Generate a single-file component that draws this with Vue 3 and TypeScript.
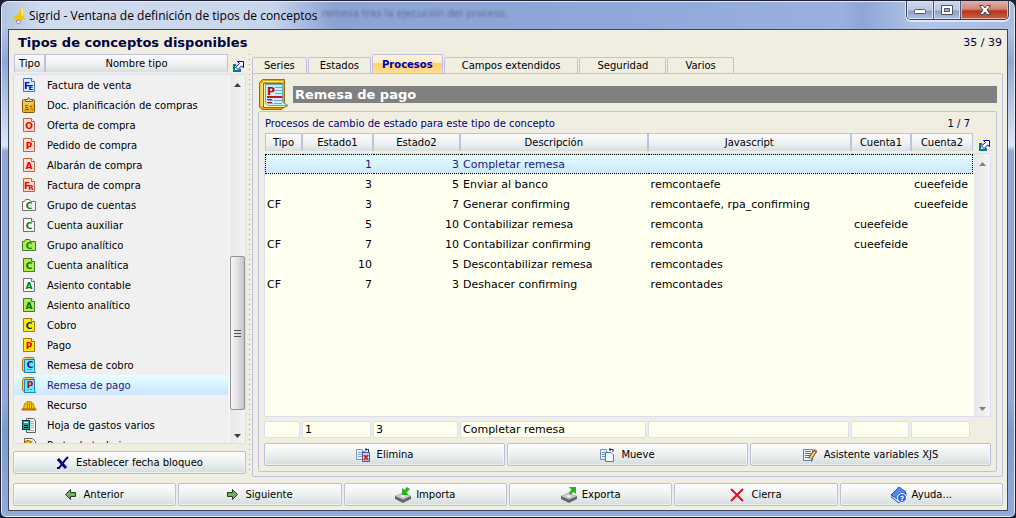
<script setup lang="ts">
import { ref } from 'vue'

type IconKind = 'doc' | 'folder' | 'book' | 'clip' | 'hat' | 'calc' | 'work'

interface Concept {
  name: string
  kind: IconKind
  letter?: string
  sub?: string
  fill?: string
  line?: string
  ink?: string
}

interface Process {
  tipo: string
  from: string
  to: string
  text: string
  js: string
  c1: string
  c2: string
}

const concepts: Concept[] = [
  { name: 'Factura de venta', kind: 'doc', letter: 'F', sub: 'E', fill: '#dcecff', line: '#4a76b8', ink: '#0000e0' },
  { name: 'Doc. planificación de compras', kind: 'clip' },
  { name: 'Oferta de compra', kind: 'doc', letter: 'O', fill: '#ffdcd0', line: '#b86a40', ink: '#f00000' },
  { name: 'Pedido de compra', kind: 'doc', letter: 'P', fill: '#ffdcd0', line: '#b86a40', ink: '#f00000' },
  { name: 'Albarán de compra', kind: 'doc', letter: 'A', fill: '#ffdcd0', line: '#b86a40', ink: '#f00000' },
  { name: 'Factura de compra', kind: 'doc', letter: 'F', sub: 'R', fill: '#ffdcd0', line: '#b86a40', ink: '#f00000' },
  { name: 'Grupo de cuentas', kind: 'folder', letter: 'C', fill: '#f8f8f8', line: '#707070', ink: '#008000' },
  { name: 'Cuenta auxiliar', kind: 'doc', letter: 'C', fill: '#f8f8f8', line: '#707070', ink: '#008000' },
  { name: 'Grupo analítico', kind: 'folder', letter: 'C', fill: '#b4ec50', line: '#3f7a30', ink: '#008000' },
  { name: 'Cuenta analítica', kind: 'doc', letter: 'C', fill: '#b4ec50', line: '#3f7a30', ink: '#007000' },
  { name: 'Asiento contable', kind: 'doc', letter: 'A', fill: '#f8f8f8', line: '#707070', ink: '#008000' },
  { name: 'Asiento analítico', kind: 'doc', letter: 'A', fill: '#b4ec50', line: '#3f7a30', ink: '#007000' },
  { name: 'Cobro', kind: 'doc', letter: 'C', fill: '#ffee00', line: '#a87800', ink: '#002878' },
  { name: 'Pago', kind: 'doc', letter: 'P', fill: '#ffee00', line: '#a87800', ink: '#e00000' },
  { name: 'Remesa de cobro', kind: 'book', letter: 'C', ink: '#002060' },
  { name: 'Remesa de pago', kind: 'book', letter: 'P', ink: '#d00000' },
  { name: 'Recurso', kind: 'hat' },
  { name: 'Hoja de gastos varios', kind: 'calc' },
  { name: 'Parte de trabajo', kind: 'work' },
]

const processes: Process[] = [
  { tipo: '', from: '1', to: '3', text: 'Completar remesa', js: '', c1: '', c2: '' },
  { tipo: '', from: '3', to: '5', text: 'Enviar al banco', js: 'remcontaefe', c1: '', c2: 'cueefeide' },
  { tipo: 'CF', from: '3', to: '7', text: 'Generar confirming', js: 'remcontaefe, rpa_confirming', c1: '', c2: 'cueefeide' },
  { tipo: '', from: '5', to: '10', text: 'Contabilizar remesa', js: 'remconta', c1: 'cueefeide', c2: '' },
  { tipo: 'CF', from: '7', to: '10', text: 'Contabilizar confirming', js: 'remconta', c1: 'cueefeide', c2: '' },
  { tipo: '', from: '10', to: '5', text: 'Descontabilizar remesa', js: 'remcontades', c1: '', c2: '' },
  { tipo: 'CF', from: '7', to: '3', text: 'Deshacer confirming', js: 'remcontades', c1: '', c2: '' },
]

const tabs = ['Series', 'Estados', 'Procesos', 'Campos extendidos', 'Seguridad', 'Varios']
const columns = ['Tipo', 'Estado1', 'Estado2', 'Descripción', 'Javascript', 'Cuenta1', 'Cuenta2']

const activeTab = ref('Procesos')
const selectedConcept = ref(15)
const selectedProcess = ref(0)
const fields = ref(['', '1', '3', 'Completar remesa', '', '', ''])

function pickProcess(i: number) {
  const p = processes[i]
  selectedProcess.value = i
  fields.value = [p.tipo, p.from, p.to, p.text, p.js, p.c1, p.c2]
}
</script>

<template>
  <div class="window">
    <header class="titlebar">
      <svg class="app-icon" width="14" height="18" viewBox="0 0 14 18">
        <path d="M8 1L10 2V9L12 12L8 13L4 14L1 13L0 11L5 7Z" fill="#f4c400" />
        <path d="M8 1L10 2V9L8 8Z" fill="#ffe860" />
        <path d="M3 14L5 17L8 15L7 13Z" fill="#f4f4f4" stroke="#8b93a8" stroke-width="1" />
      </svg>
      <h1>Sigrid - Ventana de definición de tipos de conceptos</h1>
      <span class="ghost" aria-hidden="true">remesa tras la ejecución del proceso.</span>
      <div class="win-buttons">
        <button type="button" class="wb min" aria-label="Minimizar">
          <svg width="14" height="12" viewBox="0 0 14 12"><rect x="1.500" y="5.500" width="11" height="4" rx="1" fill="#fff" stroke="#4c5164" /></svg>
        </button>
        <button type="button" class="wb max" aria-label="Maximizar">
          <svg width="14" height="12" viewBox="0 0 14 12">
            <path d="M1.500 1.500H12.500V10.500H1.500Z" fill="#fff" stroke="#4c5164" />
            <path d="M4.500 4.500H9.500V7.500H4.500Z" fill="#9fb0d8" stroke="#4c5164" />
          </svg>
        </button>
        <button type="button" class="wb close" aria-label="Cerrar">
          <svg width="14" height="12" viewBox="0 0 14 12">
            <path d="M1.500 1.500H5L7 4L9 1.500H12.500L9 6L12.500 10.500H9L7 8L5 10.500H1.500L5 6Z" fill="#fff" stroke="#54495c" />
          </svg>
        </button>
      </div>
    </header>

    <main class="client">
      <div class="top">
        <h2>Tipos de conceptos disponibles</h2>
        <span class="count">35 / 39</span>
      </div>

      <div class="body">
        <section class="left">
          <div class="concepts">
            <div class="list-box"></div>
            <div class="clip">
              <table class="concept-table">
                <colgroup><col class="c-icon" /><col /></colgroup>
                <thead>
                  <tr><th scope="col">Tipo</th><th scope="col">Nombre tipo</th></tr>
                </thead>
                <tbody>
                  <tr
                    v-for="(c, i) in concepts"
                    :key="c.name"
                    :class="{ selected: i === selectedConcept }"
                    @click="selectedConcept = i"
                  >
                    <td>
                      <svg class="ico" width="16" height="16" viewBox="0 0 16 16" aria-hidden="true">
                        <template v-if="c.kind === 'doc'">
                          <path d="M2.500 1.500H10.500L13.500 4.500V14.500H2.500Z" :fill="c.fill" :stroke="c.line" />
                          <path d="M10.500 1.500V4.500H13.500" fill="#fff" :stroke="c.line" />
                          <text :x="c.sub ? 6 : 8" y="12" class="glyph" :fill="c.ink">{{ c.letter }}</text>
                          <text v-if="c.sub" x="10" y="13" class="glyph small" :fill="c.ink">{{ c.sub }}</text>
                        </template>
                        <template v-else-if="c.kind === 'folder'">
                          <path d="M1.500 13.500V4.500H3.500L4.500 2.500H8.500L9.500 4.500H14.500V13.500Z" :fill="c.fill" :stroke="c.line" />
                          <text x="8" y="12" class="glyph" :fill="c.ink">{{ c.letter }}</text>
                        </template>
                        <template v-else-if="c.kind === 'book'">
                          <path d="M1.500 2.500L3.500 0.500H12.500V3L4 3V15L1.500 13.500Z" fill="#f0c860" stroke="#b07c10" />
                          <path d="M3.500 2.500H13.500V13.500L14.500 15.500H3.500Z" fill="#70e4ff" stroke="#1888b0" />
                          <text x="9" y="11" class="glyph" :fill="c.ink">{{ c.letter }}</text>
                          <path d="M6 12.500H12" stroke="#3090d0" stroke-dasharray="2 1" />
                        </template>
                        <template v-else-if="c.kind === 'clip'">
                          <rect x="1.500" y="2.500" width="12" height="13" rx="1" fill="#e8b020" stroke="#80580c" />
                          <path d="M2 3H13V6L2 13Z" fill="#f8d868" opacity="0.600" />
                          <path d="M4.500 4.500V2.500H6.500L7.500 0.500L9.500 2.500H11.500V4.500Z" fill="#d8d0b8" stroke="#6c604c" />
                          <path d="M4 8.500H7M4 10.500H7M4 12.500H8M9 9.500H11M10 11.500L12 13" stroke="#805808" />
                        </template>
                        <template v-else-if="c.kind === 'hat'">
                          <path d="M2.500 12C3 6 5 4.500 8 4.500S13 6 13.500 12Z" fill="#f8c000" stroke="#c08400" />
                          <path d="M6.500 6V11M8.500 6V11M10.500 6V11" stroke="#d07800" />
                          <path d="M0.500 12.500H15.500" stroke="#b07400" stroke-width="2" />
                        </template>
                        <template v-else-if="c.kind === 'calc'">
                          <path d="M5.500 1.500H12.500L14.500 3.500V15.500H5.500Z" fill="#f0f0f0" stroke="#606060" />
                          <path d="M9 4.500H13M9 6.500H13M9 8.500H13M9 10.500H13M7 13.500H13" stroke="#b0b0b0" />
                          <rect x="1.500" y="3.500" width="7" height="9" fill="#10a8a0" stroke="#083c40" />
                          <rect x="3" y="5" width="4" height="1" fill="#fff" />
                          <path d="M3 8.500H7M3 10.500H7" stroke="#000" stroke-width="1" />
                        </template>
                        <template v-else>
                          <path d="M3.500 1.500H11.500L14.500 4.500V15.500H3.500Z" fill="#f0f0f0" stroke="#606060" />
                          <path d="M9 4.500H12M10 6.500H13" stroke="#a0a0a0" />
                          <circle cx="7" cy="7" r="3.500" fill="#f0c000" stroke="#8c6400" />
                        </template>
                      </svg>
                    </td>
                    <td>{{ c.name }}</td>
                  </tr>
                </tbody>
              </table>
            </div>
            <button type="button" class="expand" aria-label="Ampliar lista">
              <svg width="11" height="11" viewBox="0 0 11 11">
                <path d="M3 4H1V10H7V8" fill="none" stroke="#008080" stroke-width="2" />
                <path d="M4.500 0.500H10.500V6.500L8.500 5L5 8.500L2.500 6L6.500 2.500Z" fill="#fff" stroke="#0000c8" />
              </svg>
            </button>
            <div class="scroll">
              <svg width="7" height="4" viewBox="0 0 7 4"><path d="M0 4L3.500 0L7 4Z" fill="#404040" /></svg>
              <div class="thumb"><i></i><i></i><i></i></div>
              <svg width="7" height="4" viewBox="0 0 7 4"><path d="M0 0L3.500 4L7 0Z" fill="#404040" /></svg>
            </div>
          </div>
          <button type="button" class="btn">
            <svg width="13" height="13" viewBox="0 0 13 13">
              <path d="M2 3L10 12" stroke="#000080" stroke-width="3" />
              <path d="M1 12H3L10 3L12 1" fill="none" stroke="#000080" stroke-width="2" />
            </svg>
            Establecer fecha bloqueo
          </button>
        </section>

        <div class="splitter"></div>

        <section class="right">
          <div class="tabs" role="tablist">
            <button
              v-for="t in tabs"
              :key="t"
              type="button"
              role="tab"
              class="tab"
              :class="{ active: t === activeTab }"
              :aria-selected="t === activeTab"
              @click="activeTab = t"
            >{{ t }}</button>
          </div>

          <div class="panel">
            <div class="banner">
              <svg width="31" height="31" viewBox="0 0 31 31" aria-hidden="true">
                <path d="M1.500 3.500L4.500 0.500H26.500V27L24 30.500H4L1.500 28Z" fill="#dca820" stroke="#9c6c00" />
                <path d="M2.500 4V28L5 26V4Z" fill="#f8dc70" />
                <path d="M5 2.500H25" stroke="#fff0a0" />
                <path d="M5.500 4.500H24.500V23L30 26.500L26 28.500H5.500Z" fill="#fff0b0" stroke="#9c6c00" />
                <path d="M7.500 5.500H24.500V23L29.500 26.500H10L7.500 24Z" fill="#c8f0fa" stroke="#58b0c8" />
                <text x="13" y="16" class="glyph big" fill="#cc0000">P</text>
                <path d="M17 8.500H24M17 11.500H24M17 14.500H24M10 21.500H24M10 24.500H24" stroke="#7c9cd0" />
                <path d="M9 18H24.500" stroke="#c41818" stroke-width="2" />
                <path d="M9 20.500H14M9 23.500H14" stroke="#c41818" />
                <path d="M15.500 19V26" stroke="#c8f0fa" />
              </svg>
              <h3>Remesa de pago</h3>
            </div>

            <div class="group">
              <div class="caption">
                <span>Procesos de cambio de estado para este tipo de concepto</span>
                <span class="num">1 / 7</span>
              </div>

              <div class="grid">
                <div class="grid-box"></div>
                <table class="proc-table">
                  <colgroup>
                    <col class="w-tipo" /><col class="w-e1" /><col class="w-e2" /><col class="w-desc" />
                    <col /><col class="w-c1" /><col class="w-c2" />
                  </colgroup>
                  <thead>
                    <tr><th v-for="c in columns" :key="c" scope="col">{{ c }}</th></tr>
                  </thead>
                  <tbody>
                    <tr
                      v-for="(p, i) in processes"
                      :key="i"
                      :class="{ selected: i === selectedProcess }"
                      @click="pickProcess(i)"
                    >
                      <td>{{ p.tipo }}</td>
                      <td class="r">{{ p.from }}</td>
                      <td class="r">{{ p.to }}</td>
                      <td>{{ p.text }}</td>
                      <td>{{ p.js }}</td>
                      <td>{{ p.c1 }}</td>
                      <td>{{ p.c2 }}</td>
                    </tr>
                  </tbody>
                </table>
                <button type="button" class="expand inner" aria-label="Ampliar procesos">
                  <svg width="11" height="11" viewBox="0 0 11 11">
                    <path d="M3 4H1V10H7V8" fill="none" stroke="#008080" stroke-width="2" />
                    <path d="M4.500 0.500H10.500V6.500L8.500 5L5 8.500L2.500 6L6.500 2.500Z" fill="#fff" stroke="#0000c8" />
                  </svg>
                </button>
                <div class="scroll">
                  <svg width="7" height="4" viewBox="0 0 7 4"><path d="M0 4L3.500 0L7 4Z" fill="#808080" /></svg>
                  <svg width="7" height="4" viewBox="0 0 7 4"><path d="M0 0L3.500 4L7 0Z" fill="#808080" /></svg>
                </div>
              </div>

              <div class="fields">
                <input v-for="(c, i) in columns" :key="c" v-model="fields[i]" type="text" :aria-label="c" />
              </div>

              <div class="actions three">
                <button type="button" class="btn">
                  <svg width="14" height="14" viewBox="0 0 14 14">
                    <path d="M0.500 1.500H6.500V11.500H0.500Z" fill="#e8f2ff" stroke="#8098b8" />
                    <path d="M2 4.500H6M2 6.500H6M2 8.500H6" stroke="#88a8d0" />
                    <path d="M6.500 4.500H13.500V13.500H6.500Z" fill="#c0d8f8" stroke="#405890" />
                    <path d="M9 1.500H13M10 0V3M12.500 1V4" stroke="#203870" />
                    <path d="M8 7L12 12M12 7L8 12" stroke="#e01818" stroke-width="2" />
                    <path d="M6 3.500H9" stroke="#e040e0" />
                  </svg>
                  Elimina
                </button>
                <button type="button" class="btn">
                  <svg width="14" height="14" viewBox="0 0 14 14">
                    <path d="M0.500 1.500H6.500V11.500H0.500Z" fill="#e8f2ff" stroke="#6c94c0" />
                    <path d="M2 4.500H5M2 6.500H5M2 8.500H5" stroke="#6c94c0" />
                    <path d="M5.500 4.500H11L13.500 7V13.500H5.500Z" fill="#f4f8ff" stroke="#5878a0" />
                    <path d="M9 1.500H13M10 0V3M13 1V4" stroke="#103060" />
                  </svg>
                  Mueve
                </button>
                <button type="button" class="btn">
                  <svg width="14" height="14" viewBox="0 0 14 14">
                    <path d="M0.500 1.500H9.500V12.500H0.500Z" fill="#f4f8ff" stroke="#68809c" />
                    <path d="M2 3.500H8M2 5.500H8M2 7.500H7M2 9.500H6" stroke="#5878a0" />
                    <path d="M7 11L12 3" stroke="#60502c" stroke-width="4" />
                    <path d="M7 11L12 3" stroke="#f4d070" stroke-width="2" />
                    <path d="M12 4L13 2" stroke="#c06048" stroke-width="4" />
                    <path d="M8.500 11V14" stroke="#e040e0" />
                  </svg>
                  Asistente variables XJS
                </button>
              </div>
            </div>
          </div>
        </section>
      </div>

      <footer class="actions six">
        <button type="button" class="btn">
          <svg width="11" height="11" viewBox="0 0 11 11">
            <path d="M0.500 5.500L5.500 0.500V3.500H10.500V7.500H5.500V10.500Z" fill="#74b060" stroke="#283c24" />
          </svg>
          Anterior
        </button>
        <button type="button" class="btn">
          <svg width="11" height="11" viewBox="0 0 11 11">
            <path d="M10.500 5.500L5.500 0.500V3.500H0.500V7.500H5.500V10.500Z" fill="#74b060" stroke="#283c24" />
          </svg>
          Siguiente
        </button>
        <button type="button" class="btn tight">
          <svg width="16" height="16" viewBox="0 0 16 16">
            <path d="M0 9L7 6L16 9V12L8 16L0 12Z" fill="#686868" />
            <path d="M0 9L7 6L16 9L8 12.500Z" fill="#c8c8c8" />
            <path d="M5 9L8 8L11 9L8 10.500Z" fill="#f0f0f0" />
            <path d="M7 1V8H14L11.500 5.500L15 2L12 0L9.500 3Z" fill="#30b020" />
          </svg>
          Importa
        </button>
        <button type="button" class="btn tight">
          <svg width="16" height="16" viewBox="0 0 16 16">
            <path d="M0 9L7 6L16 9V12L8 16L0 12Z" fill="#686868" />
            <path d="M0 9L7 6L16 9L8 12.500Z" fill="#c8c8c8" />
            <path d="M5 9L8 8L11 9L8 10.500Z" fill="#f0f0f0" />
            <path d="M8 0H15V7L12.500 5L9.500 8L7.500 6L10.500 3Z" fill="#30b020" />
          </svg>
          Exporta
        </button>
        <button type="button" class="btn">
          <svg width="14" height="14" viewBox="0 0 14 14">
            <path d="M1 1L13 13M13 1L1 13" stroke="#d81028" stroke-width="2" />
          </svg>
          Cierra
        </button>
        <button type="button" class="btn tight">
          <svg width="16" height="16" viewBox="0 0 16 16">
            <path d="M0 8L8 0L15 5L8 13Z" fill="#5088f0" stroke="#2850b8" />
            <path d="M0 8L8 13L15 6V9L8 16L0 10Z" fill="#d8e4fc" stroke="#2850b8" />
            <circle cx="11" cy="11" r="4.500" fill="#2868e8" stroke="#fff" />
            <text x="11" y="14" class="glyph small" fill="#fff">?</text>
          </svg>
          Ayuda...
        </button>
      </footer>
    </main>
  </div>
</template>

<style>
html,
body {
  background: #1c2030;
}
</style>

<style scoped>
* {
  box-sizing: border-box;
}

.window {
  display: flex;
  flex-direction: column;
  height: 100vh;
  padding: 0 7px 6px;
  border: 1px solid #1c2030;
  border-radius: 8px 8px 6px 6px;
  box-shadow: inset 0 0 0 1px #e4ecf8;
  background: linear-gradient(180deg, #c0cde6 0, #b2c2e4 28px, #8fa6d6 60px, #dde6f6 145px, #93a8d8 150px, #93a8d8 400px, #7d9ccb 430px, #93aadb 100%);
  font-family: "DejaVu Sans", Verdana, sans-serif;
  font-size: 10px;
  color: #000;
}

.titlebar {
  display: flex;
  flex: none;
  align-items: center;
  height: 27px;
  margin: 1px -6px 0;
  padding-left: 11px;
  border-radius: 6px 6px 0 0;
  background: linear-gradient(90deg, #b4c4e0 0, #d0dcee 40px, #c8d6ec 270px, #8ca3d2 330px, #8ea6d8 560px, #99b0e0 840px, #8ea6d6 860px, #b4c4e6 920px, #a8bce0 100%);
}

.app-icon {
  flex: none;
  margin-right: 2px;
}

h1 {
  margin: 0;
  font: 12px/16px "Open Sans", "Noto Sans", sans-serif;
  white-space: nowrap;
}

.ghost {
  padding: 0 0 4px 4px;
  font: 10px/12px "DejaVu Sans", sans-serif;
  color: #3c4c78;
  opacity: 0.6;
  filter: blur(1px);
  white-space: nowrap;
}

.win-buttons {
  display: flex;
  align-self: flex-start;
  height: 19px;
  margin: -1px 5px 0 auto;
  border: 1px solid #3a4258;
  border-top: 0;
  border-radius: 0 0 5px 5px;
  box-shadow: 0 1px 0 1px #dce6f6;
  overflow: hidden;
}

.wb {
  display: grid;
  place-items: center;
  width: 27px;
  padding: 0;
  border: 0;
  border-right: 1px solid #4c5878;
  background: linear-gradient(#d0d9ea 0, #bcc8e0 9px, #8e9fc4 10px, #b0c2e4 100%);
  box-shadow: inset 0 0 0 1px #d8e2f2;
}

.wb.close {
  width: 47px;
  border-right: 0;
  background: linear-gradient(#e0b0a8 0, #d08878 8px, #b83420 10px, #cc6440 100%);
  box-shadow: inset 0 0 0 1px #e8b0a4;
}

.client {
  display: flex;
  flex: 1;
  flex-direction: column;
  min-height: 0;
  padding: 0 4px 4px;
  border: 1px solid #3c465c;
  background: #f0eee0;
}

.top {
  display: flex;
  flex: none;
  justify-content: space-between;
  height: 24px;
  padding: 0 1px 0 5px;
}

h2 {
  margin: 0;
  font-size: 13px;
  line-height: 25px;
  color: #000040;
}

.count {
  font-size: 11px;
  line-height: 25px;
  color: #000040;
}

.body {
  display: flex;
  flex: 1;
  min-height: 0;
}

.left {
  display: flex;
  flex: 0 0 233px;
  flex-direction: column;
  gap: 7px;
  padding-bottom: 3px;
}

.concepts {
  display: grid;
  flex: 1;
  grid-template-rows: 20px minmax(0, 1fr);
  grid-template-columns: minmax(0, 1fr) 17px;
  min-height: 0;
}

.list-box,
.grid-box {
  grid-area: 2 / 1 / 3 / 3;
  border: 1px solid #dcdcf4;
  border-radius: 2px;
  background: #f0f0f0;
}

.clip {
  grid-area: 1 / 1 / 3 / 2;
  min-height: 0;
  margin: 0 1px 1px;
  overflow: hidden;
}

table {
  width: 100%;
  border-collapse: separate;
  border-spacing: 0;
  table-layout: fixed;
}

th {
  height: 18px;
  padding: 0;
  border: solid #c0c0e0;
  border-width: 1px 2px 0 0;
  background: linear-gradient(#fafafa, #f0f2f2 50%, #d8dfdf);
  font-size: 10px;
  font-weight: normal;
  text-align: center;
}

th:first-child {
  border-left-width: 1px;
}

th:last-child {
  border-right-width: 1px;
}

tbody::before {
  content: "";
  display: block;
  height: 3px;
}

td {
  height: 20px;
  padding: 0;
  overflow: hidden;
  white-space: nowrap;
}

.c-icon {
  width: 32px;
}

.concept-table td:first-child {
  padding-left: 7px;
}

.concept-table td:last-child {
  padding-left: 1px;
}

.ico {
  display: block;
}

.glyph {
  font: bold 9px "DejaVu Sans", sans-serif;
  text-anchor: middle;
}

.glyph.small {
  font-size: 7px;
}

.glyph.big {
  font-size: 11px;
}

tr.selected td {
  background: linear-gradient(#e4ffff, #cce6ff);
  color: #202080;
}

.expand {
  display: grid;
  grid-area: 1 / 2 / 2 / 3;
  place-items: center;
  padding: 4px 0 0 2px;
  border: 0;
  background: none;
}

.expand.inner {
  padding-left: 4px;
}

.scroll {
  display: flex;
  grid-area: 2 / 2 / 3 / 3;
  flex-direction: column;
  align-items: center;
  justify-content: space-between;
  margin: 1px 1px 1px 0;
  padding: 8px 0 5px;
  border-left: 1px solid #fafafa;
  background: linear-gradient(90deg, #e8e8e8, #f4f4f4);
}

.thumb {
  display: flex;
  flex: none;
  flex-direction: column;
  align-items: center;
  justify-content: center;
  gap: 2px;
  width: 15px;
  height: 154px;
  margin-top: auto;
  margin-bottom: 24px;
  border: 1px solid #94949c;
  border-radius: 2px;
  background: linear-gradient(90deg, #f6f6f6, #e4e4e6 45%, #c4c4ca);
}

.thumb i {
  width: 7px;
  height: 1px;
  background: #505058;
}

.btn {
  display: flex;
  align-items: center;
  justify-content: center;
  gap: 7px;
  min-width: 0;
  height: 23px;
  padding: 0;
  border: 1px solid #bcbce0;
  border-radius: 2px;
  background: linear-gradient(#fcfcfc, #f0f2f2 45%, #d4dddd);
  box-shadow: inset 0 0 0 1px #ffffff80;
  font: 10px/14px "DejaVu Sans", Verdana, sans-serif;
  color: #000;
  white-space: nowrap;
}

.btn.tight {
  gap: 5px;
}

.left .btn {
  flex: none;
}

.splitter {
  flex: 0 0 6px;
  margin-bottom: 5px;
  background: conic-gradient(at 1px 1px, transparent 75%, #a0a098 75%) 3px 0 / 6px 5px;
}

.right {
  display: flex;
  flex: 1;
  flex-direction: column;
  min-width: 0;
}

.tabs {
  display: flex;
  flex: none;
  align-items: flex-end;
  gap: 1px;
  height: 20px;
  margin-bottom: -1px;
}

.tab {
  height: 17px;
  padding: 0 11px;
  border: 1px solid #c0c0e0;
  border-bottom: 0;
  border-radius: 2px 2px 0 0;
  background: none;
  font: 10px/14px "DejaVu Sans", Verdana, sans-serif;
  color: #000;
  white-space: nowrap;
}

.tab:nth-child(n + 4) {
  padding: 0 17px;
}

.tab.active {
  height: 20px;
  padding: 0 9px;
  background: linear-gradient(#fff4dc, #ffeec0 40%, #ffd068 45%, #ffe09a);
  font-weight: bold;
  color: #0000b0;
}

.panel {
  display: flex;
  flex: 1;
  flex-direction: column;
  min-height: 0;
  padding: 4px 5px;
  border: 1px solid #c0c0e0;
  border-radius: 2px;
}

.banner {
  display: flex;
  flex: none;
  align-items: center;
  gap: 4px;
  height: 32px;
}

h3 {
  flex: 1;
  height: 17px;
  margin: 0;
  padding-left: 2px;
  background: #808080;
  font-size: 13px;
  line-height: 17px;
  color: #fff;
}

.group {
  display: flex;
  flex: 1;
  flex-direction: column;
  min-height: 0;
  margin-top: 1px;
  padding: 0 5px 5px;
  border: 1px solid #c0c0e0;
  border-radius: 2px;
}

.caption {
  display: flex;
  flex: none;
  justify-content: space-between;
  height: 21px;
  padding: 0 21px 0 1px;
  line-height: 23px;
  color: #000080;
}

.caption .num {
  color: #000040;
}

.grid {
  display: grid;
  flex: 1;
  grid-template-rows: 20px minmax(0, 1fr);
  grid-template-columns: minmax(0, 1fr) 18px;
  min-height: 0;
}

.grid-box {
  background: #fffff0;
}

.proc-table {
  grid-area: 1 / 1 / 3 / 2;
  align-self: start;
  padding-left: 1px;
}

.proc-table td {
  padding: 0 2px;
  font-size: 11px;
}

.proc-table .r {
  text-align: right;
}

.proc-table tr.selected td {
  border: dotted #000;
  border-width: 1px 0;
}

.proc-table tr.selected td:first-child {
  border-left-width: 1px;
}

.proc-table tr.selected td:last-child {
  border-right-width: 1px;
}

.w-tipo { width: 38px; }
.w-e1 { width: 71px; }
.w-e2 { width: 87px; }
.w-desc { width: 26.5%; }
.w-c1 { width: 60px; }
.w-c2 { width: 61px; }

.fields {
  display: grid;
  flex: none;
  grid-template-columns: 36px 69px 85px 186fr 201fr 58px 59px;
  gap: 2px;
  margin: 4px 21px 5px 0;
}

.fields input {
  min-width: 0;
  width: 100%;
  height: 17px;
  padding: 0 2px;
  border: 1px solid #dcdcf4;
  border-radius: 2px;
  background: #fffff0;
  font: 11px/14px "DejaVu Sans", Verdana, sans-serif;
  color: #000;
}

.actions {
  display: grid;
  flex: none;
  gap: 2px;
}

.three {
  grid-template-columns: repeat(3, minmax(0, 1fr));
}

.six {
  grid-template-columns: repeat(6, minmax(0, 1fr));
  margin-top: 6px;
}
</style>
